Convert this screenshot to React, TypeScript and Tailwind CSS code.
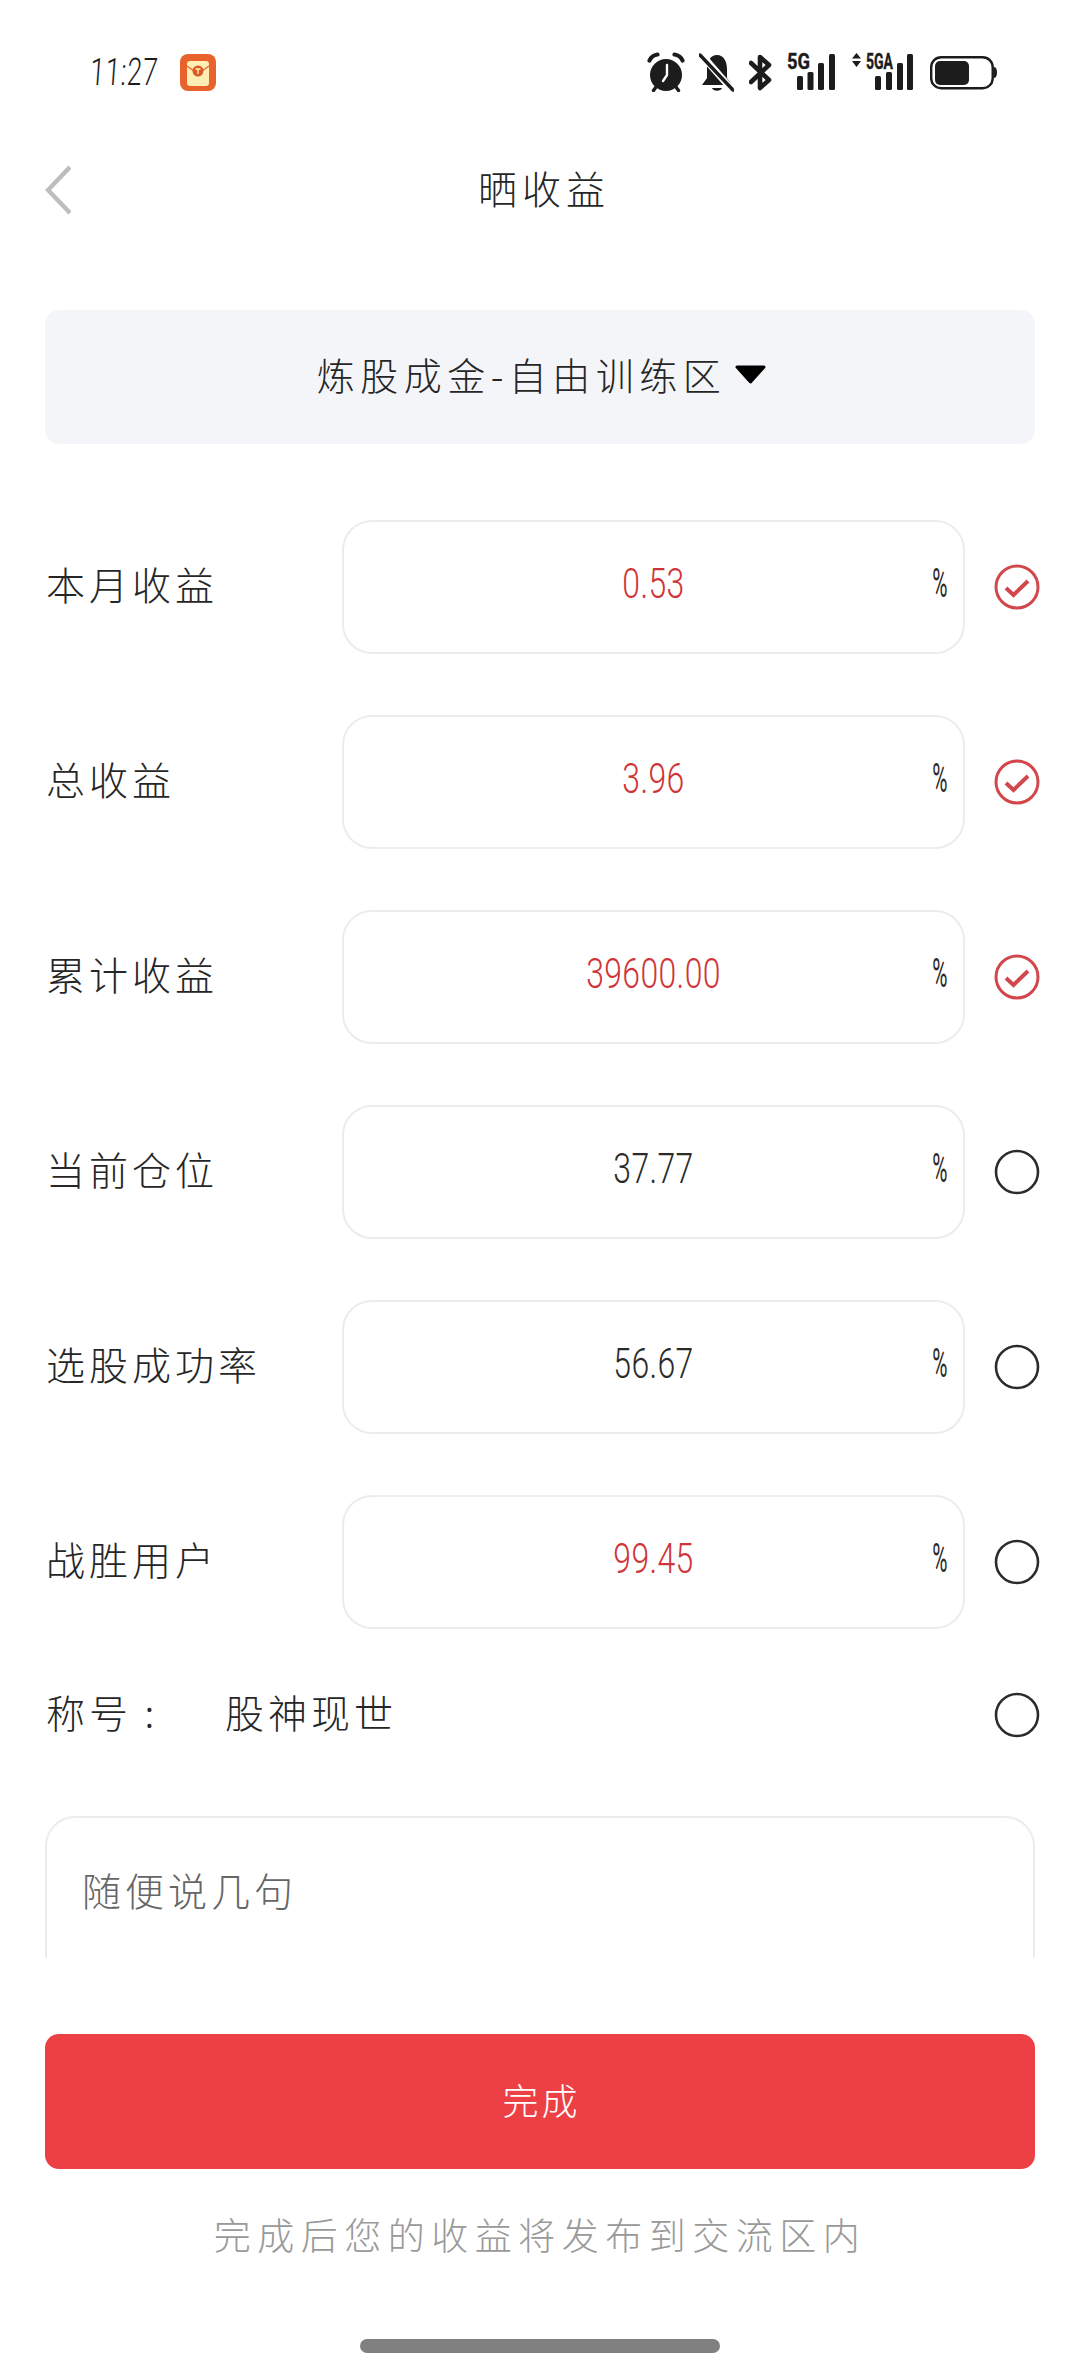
import { ReactNode } from "react";

const cjk = "font-['Noto_Sans_CJK_SC','Noto_Sans',sans-serif] font-light";
const digits = "font-['Roboto',sans-serif] font-light";

type Row = { label: string; value: string; red: boolean; checked: boolean };

const rows: Row[] = [
  { label: "本月收益", value: "0.53", red: true, checked: true },
  { label: "总收益", value: "3.96", red: true, checked: true },
  { label: "累计收益", value: "39600.00", red: true, checked: true },
  { label: "当前仓位", value: "37.77", red: false, checked: false },
  { label: "选股成功率", value: "56.67", red: false, checked: false },
  { label: "战胜用户", value: "99.45", red: true, checked: false },
];

function AlarmIcon() {
  return (
    <svg width="38" height="40" viewBox="0 0 38 40" className="shrink-0">
      <circle cx="19" cy="23" r="16" fill="#1c1c1c" />
      <path d="M2.5 8.5 Q4.5 3.5 10.5 2.5 M35.5 8.5 Q33.5 3.5 27.5 2.5" fill="none" stroke="#1c1c1c" strokeWidth="4.2" strokeLinecap="round" />
      <path d="M9 35 L6.5 38.5 M29 35 L31.5 38.5" stroke="#1c1c1c" strokeWidth="3.4" strokeLinecap="round" />
      <path d="M20 13 V23 L16 29" stroke="#fff" strokeWidth="2.4" fill="none" strokeLinecap="round" strokeLinejoin="round" />
    </svg>
  );
}

function MutedBellIcon() {
  return (
    <svg width="35" height="40" viewBox="0 0 35 40" className="shrink-0">
      <path d="M18 3 C25 3 28 10 28 17 V26 L33 33 H3 L8 26 V17 C8 10 11 3 18 3 Z" fill="#1c1c1c" />
      <path d="M13 36 H23 C22 39.5 14 39.5 13 36 Z" fill="#1c1c1c" />
      <path d="M1 1 L35 40" stroke="#fff" strokeWidth="7" />
      <path d="M1 3 L34 38" stroke="#1c1c1c" strokeWidth="3.4" strokeLinecap="round" />
    </svg>
  );
}

function BluetoothIcon() {
  return (
    <svg width="23" height="40" viewBox="0 0 23 40" className="shrink-0">
      <path d="M2 11 L20 28 L11 36 V5 L20 13 L2 30" fill="none" stroke="#1c1c1c" strokeWidth="4.6" strokeLinejoin="round" strokeLinecap="round" />
    </svg>
  );
}

// four signal bars with the network label written above the short ones
function SignalIcon({ width, label, labelX, labelW, bars, arrows }: { width: number; label: string; labelX: number; labelW: number; bars: number[]; arrows?: boolean }) {
  const tops = [24, 20, 11, 2];
  return (
    <svg width={width} height="40" viewBox={`0 0 ${width} 40`} className="shrink-0 overflow-visible">
      {arrows && <path d="M4.5 1 L9 6.5 H0 Z M4.5 15 L9 9 H0 Z" fill="#1c1c1c" />}
      <text x={labelX} y="16.5" fontFamily="Roboto, sans-serif" fontWeight="700" fontSize="22" fill="#1c1c1c" stroke="#1c1c1c" strokeWidth="0.4" textLength={labelW} lengthAdjust="spacingAndGlyphs">
        {label}
      </text>
      {bars.map((x, i) => (
        <rect key={x} x={x} y={tops[i]} width="6" height={38 - tops[i]} rx="1.5" fill="#1c1c1c" />
      ))}
    </svg>
  );
}

function BatteryIcon() {
  return (
    <svg width="67" height="40" viewBox="0 0 67 40" className="shrink-0">
      <rect x="1.2" y="5.2" width="61.5" height="31" rx="10" fill="none" stroke="#1c1c1c" strokeWidth="2.4" />
      <rect x="5" y="9" width="34" height="24" rx="5" fill="#1c1c1c" />
      <path d="M63.5 15 C66 15 67 17 67 20.5 C67 24 66 26 63.5 26 Z" fill="#1c1c1c" />
    </svg>
  );
}

function AppBadge() {
  return (
    <svg width="36" height="37" viewBox="0 0 36 37" className="ml-[23px] shrink-0">
      <rect width="36" height="37" rx="8" fill="#e8632b" />
      <rect x="7" y="7" width="22" height="25" rx="3" fill="#fdeeb4" />
      <path d="M7 12 L18 20 L29 12" fill="none" stroke="#e8632b" strokeWidth="1.2" />
      <circle cx="18" cy="17" r="5.5" fill="#dd5a25" />
      <path d="M15.5 15 H20.5 M18 15 V20" stroke="#fdeeb4" strokeWidth="1.4" />
    </svg>
  );
}

function CheckMark({ checked }: { checked: boolean }) {
  const color = checked ? "#d2474c" : "#2b2b2b";
  return (
    <svg width="46" height="46" viewBox="0 0 46 46" className="ml-[29px] shrink-0">
      <circle cx="23" cy="23" r="21" fill="none" stroke={color} strokeWidth={checked ? 3 : 2.6} />
      {checked && <path d="M12 24 L19.5 31 L34 17" fill="none" stroke={color} strokeWidth="4" />}
    </svg>
  );
}

function Label({ children, className }: { children: ReactNode; className?: string }) {
  return <span className={`${cjk} inline-block -translate-y-[4px] text-[39px] leading-[50px] tracking-[4px] ${className ?? "text-[#262626]"}`}>{children}</span>;
}

function ProfitRow({ label, value, red, checked }: Row) {
  return (
    <div className="flex items-center">
      <div className="w-[297px] shrink-0 pl-[1px]">
        <Label>{label}</Label>
      </div>
      <div className="grid h-[134px] w-[623px] shrink-0 grid-cols-[60px_1fr_60px] items-center rounded-[30px] border-2 border-[#ececec]">
        <span />
        <span className={`${digits} -translate-y-[3px] scale-x-[0.76] text-center text-[42px] leading-[50px] tracking-[0.5px] ${red ? "text-[#cf3538]" : "text-[#2b2b2b]"}`}>{value}</span>
        <span className="origin-right -translate-y-[3px] scale-x-[0.52] pr-[30px] text-right font-['Roboto',sans-serif] text-[40px] font-normal leading-[50px] text-[#2b2b2b]">%</span>
      </div>
      <CheckMark checked={checked} />
    </div>
  );
}

export default function App() {
  return (
    <div className="flex h-[2373px] w-[1080px] flex-col overflow-hidden bg-white">
      <div className="flex h-[144px] shrink-0 items-center pl-[90px] pr-[83px]">
        <div className={`${digits} w-[67px] origin-left scale-x-[0.7] -skew-x-6 whitespace-nowrap text-[38px] tracking-[1px] text-[#1c1c1c]`}>11:27</div>
        <AppBadge />
        <div className="ml-auto flex items-center">
          <AlarmIcon />
          <div className="ml-[14px]"><MutedBellIcon /></div>
          <div className="ml-[15px]"><BluetoothIcon /></div>
          <div className="ml-[15px]">
            <SignalIcon width={48} label="5G" labelX={0} labelW={23} bars={[10, 20.5, 31, 42]} />
          </div>
          <div className="ml-[17px]">
            <SignalIcon width={61} label="5GA" labelX={14} labelW={27} bars={[23, 34, 45, 55]} arrows />
          </div>
          <div className="ml-[17px]"><BatteryIcon /></div>
        </div>
      </div>

      <div className="grid h-[92px] shrink-0 grid-cols-[1fr_auto_1fr] items-center px-[45px]">
        <svg width="26" height="50" viewBox="0 0 26 50">
          <path d="M25 2 L3 25 L25 48" fill="none" stroke="#bdbdbd" strokeWidth="4.5" />
        </svg>
        <span className={`${cjk} -translate-y-[3px] pl-[8px] text-[39px] tracking-[5px] text-[#262626]`}>晒收益</span>
        <span />
      </div>

      <div className="flex shrink-0 flex-col px-[45px]">
        <div className="mt-[74px] flex h-[134px] items-center justify-center gap-[8px] rounded-[14px] bg-[#f4f5f9] pl-[4px]">
          <span className={`${cjk} -translate-y-[3px] text-[38px] leading-[50px] tracking-[5.5px] text-[#262626]`}>炼股成金-自由训练区</span>
          <svg width="33" height="20" viewBox="0 0 33 20" className="-translate-y-[2px]">
            <path d="M3 2 H30 L16.5 17 Z" fill="#000" stroke="#000" strokeWidth="3" strokeLinejoin="round" />
          </svg>
        </div>

        <div className="mt-[76px] flex flex-col gap-[61px]">
          {rows.map((r) => (
            <ProfitRow key={r.label} {...r} />
          ))}
        </div>

        <div className="mt-[63px] flex h-[46px] items-center pl-[1px]">
          <Label className="w-[179px] shrink-0 text-[#262626]">称号 :</Label>
          <Label>股神现世</Label>
          <div className="ml-auto -mr-[5px]"><CheckMark checked={false} /></div>
        </div>

        <div className="mt-[78px] h-[142px] rounded-t-[30px] border-2 border-b-0 border-[#ececec] pl-[35px] pt-[50px]">
          <Label className="text-[#666]">随便说几句</Label>
        </div>

        <div className="mt-[76px] flex h-[135px] items-center justify-center rounded-[14px] bg-[#ec4044]">
          <span className={`${cjk} -translate-y-[3px] pl-[3px] text-[36px] tracking-[3px] text-white`}>完成</span>
        </div>

        <div className={`${cjk} mt-[43px] h-[50px] -translate-y-[3px] text-center text-[37px] leading-[50px] tracking-[6.5px] text-[#999]`}>完成后您的收益将发布到交流区内</div>
      </div>

      <div className="mx-auto mt-[77px] h-[14px] w-[360px] rounded-full bg-[#808080]" />
    </div>
  );
}
